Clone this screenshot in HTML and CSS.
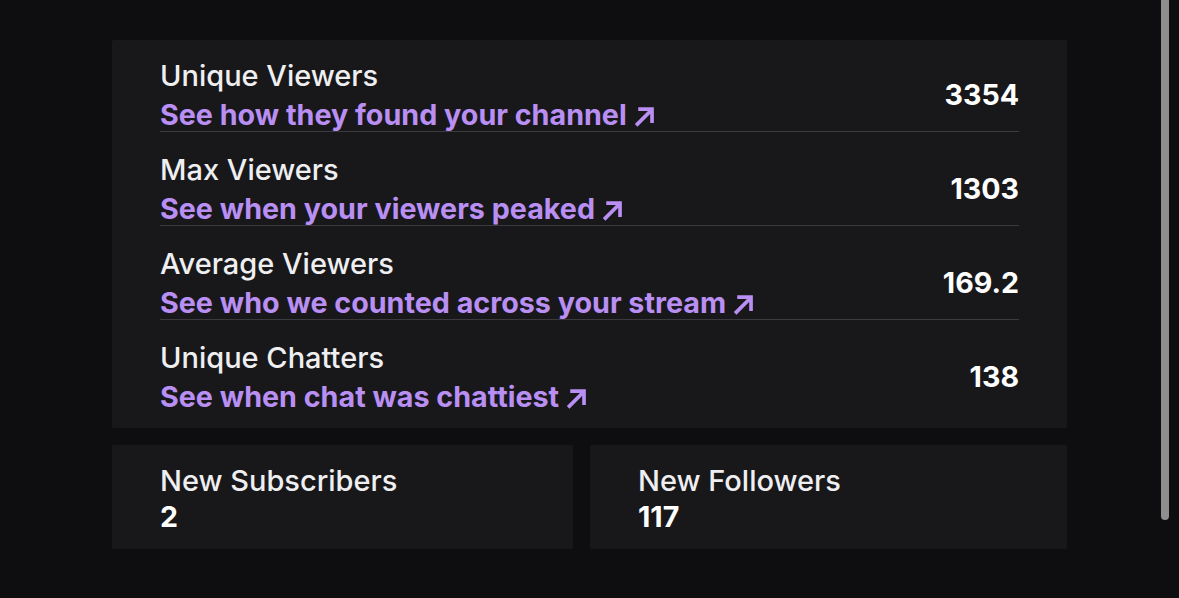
FILE: index.html
```html
<!DOCTYPE html>
<html>
<head>
<meta charset="utf-8">
<link rel="stylesheet" href="styles.css">
</head>
<body>
<main class="page">
  <section class="card stats">
    <div class="row">
      <div class="info">
        <div class="label">Unique Viewers</div>
        <a class="link">See how they found your channel<svg class="arrow" viewBox="0 0 22 22"><path d="M3 19.5 L17 5.5 M5 4 H18.2 V17.2"/></svg></a>
      </div>
      <div class="value">3354</div>
    </div>
    <div class="row">
      <div class="info">
        <div class="label">Max Viewers</div>
        <a class="link">See when your viewers peaked<svg class="arrow" viewBox="0 0 22 22"><path d="M3 19.5 L17 5.5 M5 4 H18.2 V17.2"/></svg></a>
      </div>
      <div class="value">1303</div>
    </div>
    <div class="row">
      <div class="info">
        <div class="label">Average Viewers</div>
        <a class="link">See who we counted across your stream<svg class="arrow" viewBox="0 0 22 22"><path d="M3 19.5 L17 5.5 M5 4 H18.2 V17.2"/></svg></a>
      </div>
      <div class="value">169.2</div>
    </div>
    <div class="row last">
      <div class="info">
        <div class="label">Unique Chatters</div>
        <a class="link">See when chat was chattiest<svg class="arrow" viewBox="0 0 22 22"><path d="M3 19.5 L17 5.5 M5 4 H18.2 V17.2"/></svg></a>
      </div>
      <div class="value">138</div>
    </div>
  </section>
  <section class="pair">
    <div class="card small">
      <div class="label">New Subscribers</div>
      <div class="count">2</div>
    </div>
    <div class="card small">
      <div class="label">New Followers</div>
      <div class="count">117</div>
    </div>
  </section>
</main>
<div class="scrollbar"></div>
</body>
</html>
```
FILE: styles.css
```css
html, body {
  margin: 0;
  padding: 0;
  background: #0e0e10;
  color: #efeff1;
  font-family: Inter, "Noto Sans", sans-serif;
  height: 100%;
  overflow: hidden;
}

.page {
  width: 955px;
  padding: 40px 0 0 112px;
  display: flex;
  flex-direction: column;
  gap: 17px;
}

.card {
  background: #18181b;
  border-radius: 2px;
}

.stats {
  padding: 0 48px 15px 48px;
}

.row {
  display: flex;
  align-items: center;
  justify-content: space-between;
  padding-top: 20px;
  border-bottom: 1px solid #3a3a3f;
}

.row + .row {
  padding-top: 22px;
}

.row.last {
  border-bottom: none;
}

.info {
  display: flex;
  flex-direction: column;
}

.label {
  font-size: 29px;
  line-height: 32px;
  font-weight: 500;
  color: #efeff1;
}

.link {
  font-size: 28.7px;
  line-height: 32px;
  font-weight: 700;
  color: #b98ff3;
  margin-top: 7px;
  display: flex;
  align-items: center;
}

.arrow {
  width: 23px;
  height: 23px;
  margin-left: 6px;
  margin-top: 3px;
  fill: none;
  stroke: #b98ff3;
  stroke-width: 3.5;
  stroke-linecap: butt;
}

.value {
  font-size: 28.6px;
  font-weight: 700;
  color: #ffffff;
  line-height: 32px;
  margin-top: -2px;
}

.pair {
  display: grid;
  grid-template-columns: 461fr 477fr;
  gap: 17px;
}

.small {
  height: 104px;
  box-sizing: border-box;
  padding: 20px 48px 0 48px;
}

.count {
  font-size: 28.6px;
  line-height: 32px;
  font-weight: 700;
  color: #ffffff;
  margin-top: 4px;
}

.scrollbar {
  position: fixed;
  top: 0;
  left: 1161px;
  width: 8px;
  height: 520px;
  background: #8e8e8e;
  border-radius: 0 0 4px 4px;
}
```
